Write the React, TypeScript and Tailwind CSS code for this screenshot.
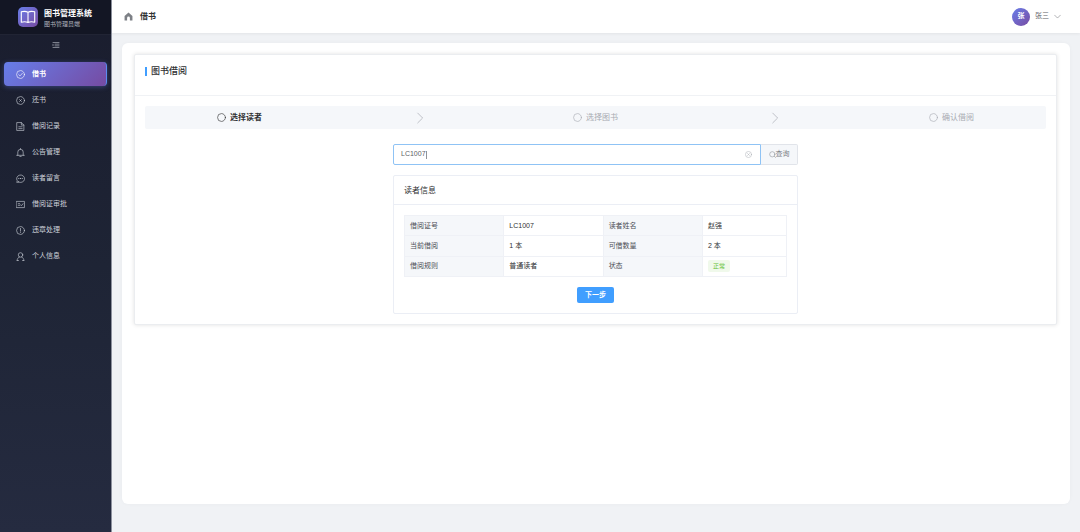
import type { ReactNode } from 'react';

interface MenuItem {
    label: string;
    icon: ReactNode;
}

// Stroke icons, all on a 16x16 grid
function Icon({ children, className = 'size-[9px]' }: { children: ReactNode; className?: string }) {
    return (
        <svg
            viewBox="0 0 16 16"
            className={`${className} shrink-0`}
            fill="none"
            stroke="currentColor"
            strokeWidth="1.1"
            strokeLinecap="round"
            strokeLinejoin="round"
            aria-hidden="true"
        >
            {children}
        </svg>
    );
}

const menuItems: MenuItem[] = [
    { label: '借书', icon: <><circle cx="8" cy="8" r="7" /><path d="M4.8 8.2l2.4 2.3 4.1-4.6" /></> },
    { label: '还书', icon: <><circle cx="8" cy="8" r="7" /><path d="M6.3 6.3l3.4 3.4M9.7 6.3L6.3 9.7" /></> },
    { label: '借阅记录', icon: <path d="M2 1h7.5L14 5.5V15H2zM9.5 1v4.5H14M5 8.5h6M5 11.8h6" /> },
    { label: '公告管理', icon: <path d="M1.2 13h13.6M3.2 13V7.2a4.8 4.8 0 0 1 9.6 0V13M8 2.4V1M6.8 15.2h2.4" /> },
    { label: '读者留言', icon: <><path d="M4.5 14.2L1.4 15l.8-3A7 6.7 0 1 1 4.5 14.2z" /><path d="M5 8.2h.1M8 8.2h.1M11 8.2h.1" strokeWidth="1.8" /></> },
    { label: '借阅证审批', icon: <><rect x="1" y="2.5" width="14" height="11" /><path d="M4 6.5h2.5M4 9.5h3M8.3 8.5l1.5 1.5 2.7-3.5" /></> },
    { label: '违章处理', icon: <><circle cx="8" cy="8" r="7" /><path d="M8 4.2v5M8 11.5v.1" /></> },
    { label: '个人信息', icon: <><circle cx="8" cy="5.2" r="4" /><path d="M2 15.2c0-3.5 1.8-5.4 4-6.2M14 15.2c0-3.5-1.8-5.4-4-6.2M2 15.2h2.5M11.5 15.2H14" /></> },
];

const steps = ['选择读者', '选择图书', '确认借阅'];

const readerRows = [
    ['借阅证号', 'LC1007', '读者姓名', '赵强'],
    ['当前借阅', '1 本', '可借数量', '2 本'],
    ['借阅规则', '普通读者', '状态', '正常'],
];

function Sidebar() {
    return (
        <aside className="w-28 shrink-0 border-r border-[#8d919e] bg-linear-to-b from-[#1a1d2e] via-[#1e2435] to-[#252b40] text-[#cdd1da]">
            <div className="flex h-[35px] items-center gap-1.5 border-b border-[#212434] bg-[#131624] pl-[18px]">
                <span className="flex size-5 items-center justify-center rounded-[5px] bg-linear-to-br from-[#667eea] to-[#764ba2] text-white">
                    <Icon className="size-4">
                        <path d="M8 3.2C6 2.2 3.5 2.2 1.3 2.8v10.4c2.2-.6 4.7-.6 6.7.3 2-.9 4.5-.9 6.7-.3V2.8C12.5 2.2 10 2.2 8 3.2zM8 3.2v10.3" />
                    </Icon>
                </span>
                <div className="pt-1 whitespace-nowrap">
                    <p className="text-[8px] leading-[10px] font-bold text-white">图书管理系统</p>
                    <p className="text-[6px] leading-[10px] text-[#b0b3bc]">图书管理员端</p>
                </div>
            </div>
            <button type="button" aria-label="折叠菜单" className="flex h-5 w-full items-center justify-center">
                <Icon className="size-2">
                    <path d="M2 3h12M6 6.3h8M6 9.7h8M2 13h12M2 6.5v3" />
                </Icon>
            </button>
            <nav className="mt-[7px] flex flex-col gap-0.5 px-1">
                {menuItems.map((item, index) => (
                    <a
                        key={item.label}
                        href="#"
                        aria-current={index === 0 ? 'page' : undefined}
                        className={
                            index === 0
                                ? 'flex h-6 items-center gap-[7px] rounded-sm border-r border-[#5a8cf0] bg-linear-[135deg] from-[#667eea] to-[#764ba2] pl-3 text-[7px] font-bold text-white shadow-[0_1px_5px_rgba(102,126,234,0.4)]'
                                : 'flex h-6 items-center gap-[7px] rounded-sm pl-3 text-[7px]'
                        }
                    >
                        <Icon>{item.icon}</Icon>
                        {item.label}
                    </a>
                ))}
            </nav>
        </aside>
    );
}

function TopBar() {
    return (
        <header className="flex h-[33px] items-center justify-between bg-white pr-[19px] pl-3 shadow-[0_1px_3px_rgba(0,0,0,0.06)]">
            <div className="flex items-center gap-[7px] text-[8px] font-bold text-[#303133]">
                <svg viewBox="0 0 16 16" className="size-[9px] text-[#7d8086]" fill="currentColor" aria-hidden="true">
                    <path d="M8 1L15 7v8h-4.5v-4.5a2.5 2.5 0 0 0-5 0V15H1V7z" />
                </svg>
                借书
            </div>
            <button type="button" className="flex items-center gap-[5px] text-[7px] text-[#606266]">
                <span className="flex size-[18px] items-center justify-center rounded-full bg-linear-to-br from-[#667eea] to-[#764ba2] font-bold text-white">
                    张
                </span>
                张三
                <Icon className="size-[7px]">
                    <path d="M1.5 5L8 11.5 14.5 5" />
                </Icon>
            </button>
        </header>
    );
}

function Steps() {
    return (
        <ol className="flex h-[23px] items-center rounded-xs bg-[#f5f7fa] px-[8%] text-[8px]">
            {steps.map((step, index) => (
                <li key={step} className={index < steps.length - 1 ? 'flex flex-1 items-center' : 'flex items-center'}>
                    <span
                        className={
                            index === 0
                                ? 'flex items-center gap-1 font-bold whitespace-nowrap text-[#303133]'
                                : 'flex items-center gap-1 whitespace-nowrap text-[#a8abb2]'
                        }
                    >
                        <Icon>
                            <circle cx="8" cy="8" r="7" />
                        </Icon>
                        {step}
                    </span>
                    {index < steps.length - 1 && (
                        <span className="flex flex-1 justify-center pl-1 text-[#b4b7bd]">
                            <Icon className="size-3">
                                <path d="M5 1.5L11.5 8 5 14.5" />
                            </Icon>
                        </span>
                    )}
                </li>
            ))}
        </ol>
    );
}

function SearchForm() {
    return (
        <form className="flex h-[21px]" onSubmit={e => e.preventDefault()}>
            <div className="relative flex flex-1 items-center rounded-l-xs border border-[#8fc3f5] bg-white pr-2 pl-[7px]">
                <input
                    type="text"
                    aria-label="借阅证号"
                    defaultValue="LC1007"
                    className="min-w-0 flex-1 text-[7px] text-[#606266] caret-transparent outline-none"
                />
                {/* Text cursor */}
                <span className="absolute left-8 h-2 w-px bg-[#909399]" />
                <button type="button" aria-label="清空" className="text-[#a8abb2]">
                    <Icon className="size-[7px]">
                        <circle cx="8" cy="8" r="7" />
                        <path d="M5.8 5.8l4.4 4.4M10.2 5.8l-4.4 4.4" />
                    </Icon>
                </button>
            </div>
            <button
                type="submit"
                className="flex w-[37px] items-center justify-center rounded-r-xs border border-l-0 border-[#e1e4ea] bg-[#f5f7fa] text-[7px] text-[#7c7f85]"
            >
                <Icon className="size-[7px]">
                    <circle cx="7.5" cy="7.5" r="6" />
                    <path d="M12 12l3 3" />
                </Icon>
                查询
            </button>
        </form>
    );
}

function ReaderInfo() {
    return (
        <section className="mt-2.5 rounded-xs border border-[#ebeef5] bg-white">
            <h3 className="border-b border-[#ebeef5] px-2.5 pt-px text-[8px] leading-[27px] text-[#303133]">读者信息</h3>
            <div className="p-2.5">
                <table className="h-[62px] w-full table-fixed border-collapse text-left text-[7px] leading-3 text-[#303133]">
                    <colgroup>
                        <col className="w-[26%]" />
                        <col className="w-[26%]" />
                        <col className="w-[26%]" />
                        <col />
                    </colgroup>
                    <tbody>
                        {readerRows.map(([label, value, label2, value2]) => (
                            <tr key={label} className="h-5">
                                <th className="border border-[#eff1f6] bg-[#f5f7fa] px-[5px] font-normal text-[#4b4e55]">{label}</th>
                                <td className="border border-[#eff1f6] px-[5px]">{value}</td>
                                <th className="border border-[#eff1f6] bg-[#f5f7fa] px-[5px] font-normal text-[#4b4e55]">{label2}</th>
                                <td className="border border-[#eff1f6] px-[5px]">
                                    {label2 === '状态' ? (
                                        <span className="block w-fit rounded-xs bg-[#f0f9eb] px-[5px] text-[6px] leading-3 text-[#67c23a]">
                                            {value2}
                                        </span>
                                    ) : (
                                        value2
                                    )}
                                </td>
                            </tr>
                        ))}
                    </tbody>
                </table>
                <button
                    type="button"
                    className="mx-auto mt-2.5 block h-4 rounded-xs bg-[#409eff] px-2 text-[7px] font-bold text-white"
                >
                    下一步
                </button>
            </div>
        </section>
    );
}

export default function App() {
    return (
        <div className="flex min-h-screen bg-[#f0f2f5] font-['Liberation_Sans','Noto_Sans_CJK_SC',sans-serif]">
            <Sidebar />
            <div className="flex min-w-0 flex-1 flex-col">
                <TopBar />
                <main className="flex flex-1 flex-col px-2.5 pt-2.5 pb-7">
                    <div className="flex-1 rounded-md bg-white pt-[11px] pr-[13px] pl-3 shadow-[0_0_4px_rgba(0,0,0,0.03)]">
                        {/* Borrow card */}
                        <section className="rounded-xs border border-[#ebedf0] bg-white shadow-[0_0_4px_rgba(0,0,0,0.12)]">
                            <div className="h-[41px] border-b border-[#f0f2f5] px-2.5 pt-2.5">
                                <h2 className="flex items-center gap-1 text-[9px] leading-3 font-medium text-[#303133]">
                                    <span className="h-[9px] w-0.5 bg-[#409eff]" />
                                    图书借阅
                                </h2>
                            </div>
                            <div className="p-2.5">
                                <Steps />
                                <div className="mx-auto mt-[15px] w-full max-w-[405px]">
                                    <SearchForm />
                                    <ReaderInfo />
                                </div>
                            </div>
                        </section>
                    </div>
                </main>
            </div>
        </div>
    );
}
